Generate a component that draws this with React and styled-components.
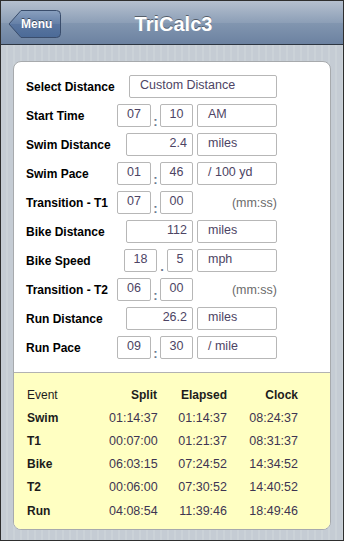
import React from 'react';
import styled, { createGlobalStyle } from 'styled-components';

const GlobalStyle = createGlobalStyle`
  html, body {
    margin: 0;
    padding: 0;
  }
  body {
    font-family: "Liberation Sans", Arial, sans-serif;
  }
`;

const Screen = styled.div`
  width: 344px;
  height: 541px;
  box-sizing: border-box;
  border: 1px solid #2e2e2e;
  display: flex;
  flex-direction: column;
  background-color: #c5ccd4;
  background-image: repeating-linear-gradient(
    90deg,
    #c5ccd4 0px,
    #c5ccd4 5px,
    #cbd2d8 5px,
    #cbd2d8 7px
  );
`;

const NavBar = styled.header`
  position: relative;
  height: 43px;
  flex-shrink: 0;
  border-bottom: 1px solid #2d3642;
  background: linear-gradient(
    to bottom,
    #b5c0cf 0%,
    #8d9fb7 50%,
    #8296b0 51%,
    #6c82a1 100%
  );
  display: flex;
  align-items: center;
  justify-content: center;
`;

const Title = styled.h1`
  margin: 0;
  padding: 3px 0 0 3px;
  font-size: 20px;
  font-weight: bold;
  color: #fff;
  text-shadow: 0 -1px 0 rgba(0, 0, 0, 0.45);
`;

const BackButton = styled.button`
  position: absolute;
  left: 7px;
  top: 8px;
  width: 54px;
  height: 30px;
  padding: 0 0 0 13px;
  border: 0;
  background: none;
  color: #fff;
  font-family: inherit;
  font-size: 12px;
  font-weight: bold;
  text-shadow: 0 -1px 0 rgba(0, 0, 0, 0.5);
  display: flex;
  align-items: center;
  cursor: pointer;

  svg {
    position: absolute;
    left: 0;
    top: 0;
  }

  span {
    position: relative;
  }
`;

const Card = styled.main`
  flex: 1;
  margin: 16px 12px 10px;
  background: #fff;
  border: 1px solid #a7aaad;
  border-radius: 8px;
  overflow: hidden;
  display: flex;
  flex-direction: column;
`;

const Form = styled.div`
  padding: 13px 53px 13px 12px;
  display: flex;
  flex-direction: column;
  gap: 6px;
`;

const Row = styled.div`
  height: 23px;
  display: flex;
  align-items: center;
  justify-content: space-between;
`;

const Label = styled.span`
  font-size: 12px;
  font-weight: bold;
  color: #000;
`;

const Controls = styled.div`
  display: flex;
  align-items: center;
  height: 23px;
`;

const Field = styled.div`
  width: ${(p) => p.$w}px;
  height: 23px;
  box-sizing: border-box;
  border: 1px solid #b7b7b7;
  border-radius: 2px;
  background: #fff;
  font-size: 12.5px;
  line-height: 19px;
  color: #4d4464;
  text-align: ${(p) => p.$align || 'left'};
  padding: ${(p) =>
    p.$align === 'right' ? '0 5px 0 0' : p.$align === 'center' ? '0' : '0 0 0 10px'};
  margin-left: ${(p) => p.$gap || 0}px;
  white-space: nowrap;
`;

const Sep = styled.span`
  width: ${(p) => p.$w}px;
  align-self: flex-end;
  text-align: center;
  font-size: 13px;
  font-weight: bold;
  line-height: 11px;
  color: #6a7890;
`;

const Note = styled.span`
  width: 80px;
  margin-left: 4px;
  text-align: right;
  font-size: 12.5px;
  color: #6b6b6b;
`;

const Results = styled.section`
  flex: 1;
  background: #ffffc2;
  border-top: 1px solid #b2b2b2;
  padding: 10px 0 0 13px;
  display: grid;
  grid-template-columns: 82px 48px 70px 71px;
  grid-auto-rows: 23.2px;
  align-content: start;
  align-items: center;
`;

const Cell = styled.span`
  white-space: nowrap;
  text-align: ${(p) => (p.$first ? 'left' : 'right')};
  font-weight: ${(p) => (p.$bold ? 'bold' : 'normal')};
  color: ${(p) => (p.$value ? '#3e3552' : '#1c1c1c')};
  font-size: ${(p) => (p.$value ? '12.5px' : '12px')};
`;

const BackShape = () => (
  <svg width="54" height="30" viewBox="0 0 54 30">
    <defs>
      <linearGradient id="backFill" x1="0" y1="0" x2="0" y2="1">
        <stop offset="0" stopColor="#8aa0bf" />
        <stop offset="0.5" stopColor="#6580a7" />
        <stop offset="0.51" stopColor="#5a76a0" />
        <stop offset="1" stopColor="#4b6a97" />
      </linearGradient>
    </defs>
    <path
      d="M1 15 L13 1.5 H48.5 A4 4 0 0 1 52.5 5.5 V24.5 A4 4 0 0 1 48.5 28.5 H13 Z"
      fill="url(#backFill)"
      stroke="#3a4d6c"
      strokeWidth="1"
    />
  </svg>
);

const rows = [
  { label: 'Select Distance', kind: 'select', value: 'Custom Distance' },
  { label: 'Start Time', kind: 'time', a: '07', b: '10', unit: 'AM' },
  { label: 'Swim Distance', kind: 'dist', value: '2.4', unit: 'miles' },
  { label: 'Swim Pace', kind: 'time', a: '01', b: '46', unit: '/ 100 yd' },
  { label: 'Transition - T1', kind: 'time', a: '07', b: '00', note: '(mm:ss)' },
  { label: 'Bike Distance', kind: 'dist', value: '112', unit: 'miles' },
  { label: 'Bike Speed', kind: 'speed', a: '18', b: '5', unit: 'mph' },
  { label: 'Transition - T2', kind: 'time', a: '06', b: '00', note: '(mm:ss)' },
  { label: 'Run Distance', kind: 'dist', value: '26.2', unit: 'miles' },
  { label: 'Run Pace', kind: 'time', a: '09', b: '30', unit: '/ mile' },
];

const splits = [
  ['Swim', '01:14:37', '01:14:37', '08:24:37'],
  ['T1', '00:07:00', '01:21:37', '08:31:37'],
  ['Bike', '06:03:15', '07:24:52', '14:34:52'],
  ['T2', '00:06:00', '07:30:52', '14:40:52'],
  ['Run', '04:08:54', '11:39:46', '18:49:46'],
];

const Tail = ({ row }) =>
  row.note ? (
    <Note>{row.note}</Note>
  ) : (
    <Field $w={80} $gap={4}>{row.unit}</Field>
  );

const InputRow = ({ row }) => {
  let controls;
  if (row.kind === 'select') {
    controls = <Field $w={148}>{row.value}</Field>;
  } else if (row.kind === 'dist') {
    controls = (
      <>
        <Field $w={67} $align="right">{row.value}</Field>
        <Tail row={row} />
      </>
    );
  } else if (row.kind === 'speed') {
    controls = (
      <>
        <Field $w={33} $align="center">{row.a}</Field>
        <Sep $w={10}>.</Sep>
        <Field $w={26} $align="center">{row.b}</Field>
        <Tail row={row} />
      </>
    );
  } else {
    controls = (
      <>
        <Field $w={34} $align="center">{row.a}</Field>
        <Sep $w={9}>:</Sep>
        <Field $w={33} $align="center">{row.b}</Field>
        <Tail row={row} />
      </>
    );
  }
  return (
    <Row>
      <Label>{row.label}</Label>
      <Controls>{controls}</Controls>
    </Row>
  );
};

const App = () => (
  <>
    <GlobalStyle />
    <Screen>
      <NavBar>
        <BackButton>
          <BackShape />
          <span>Menu</span>
        </BackButton>
        <Title>TriCalc3</Title>
      </NavBar>
      <Card>
        <Form>
          {rows.map((r) => (
            <InputRow key={r.label} row={r} />
          ))}
        </Form>
        <Results>
          <Cell $first>Event</Cell>
          <Cell $bold>Split</Cell>
          <Cell $bold>Elapsed</Cell>
          <Cell $bold>Clock</Cell>
          {splits.map(([name, split, elapsed, clock]) => (
            <React.Fragment key={name}>
              <Cell $first $bold>{name}</Cell>
              <Cell $value>{split}</Cell>
              <Cell $value>{elapsed}</Cell>
              <Cell $value>{clock}</Cell>
            </React.Fragment>
          ))}
        </Results>
      </Card>
    </Screen>
  </>
);

export default App;
